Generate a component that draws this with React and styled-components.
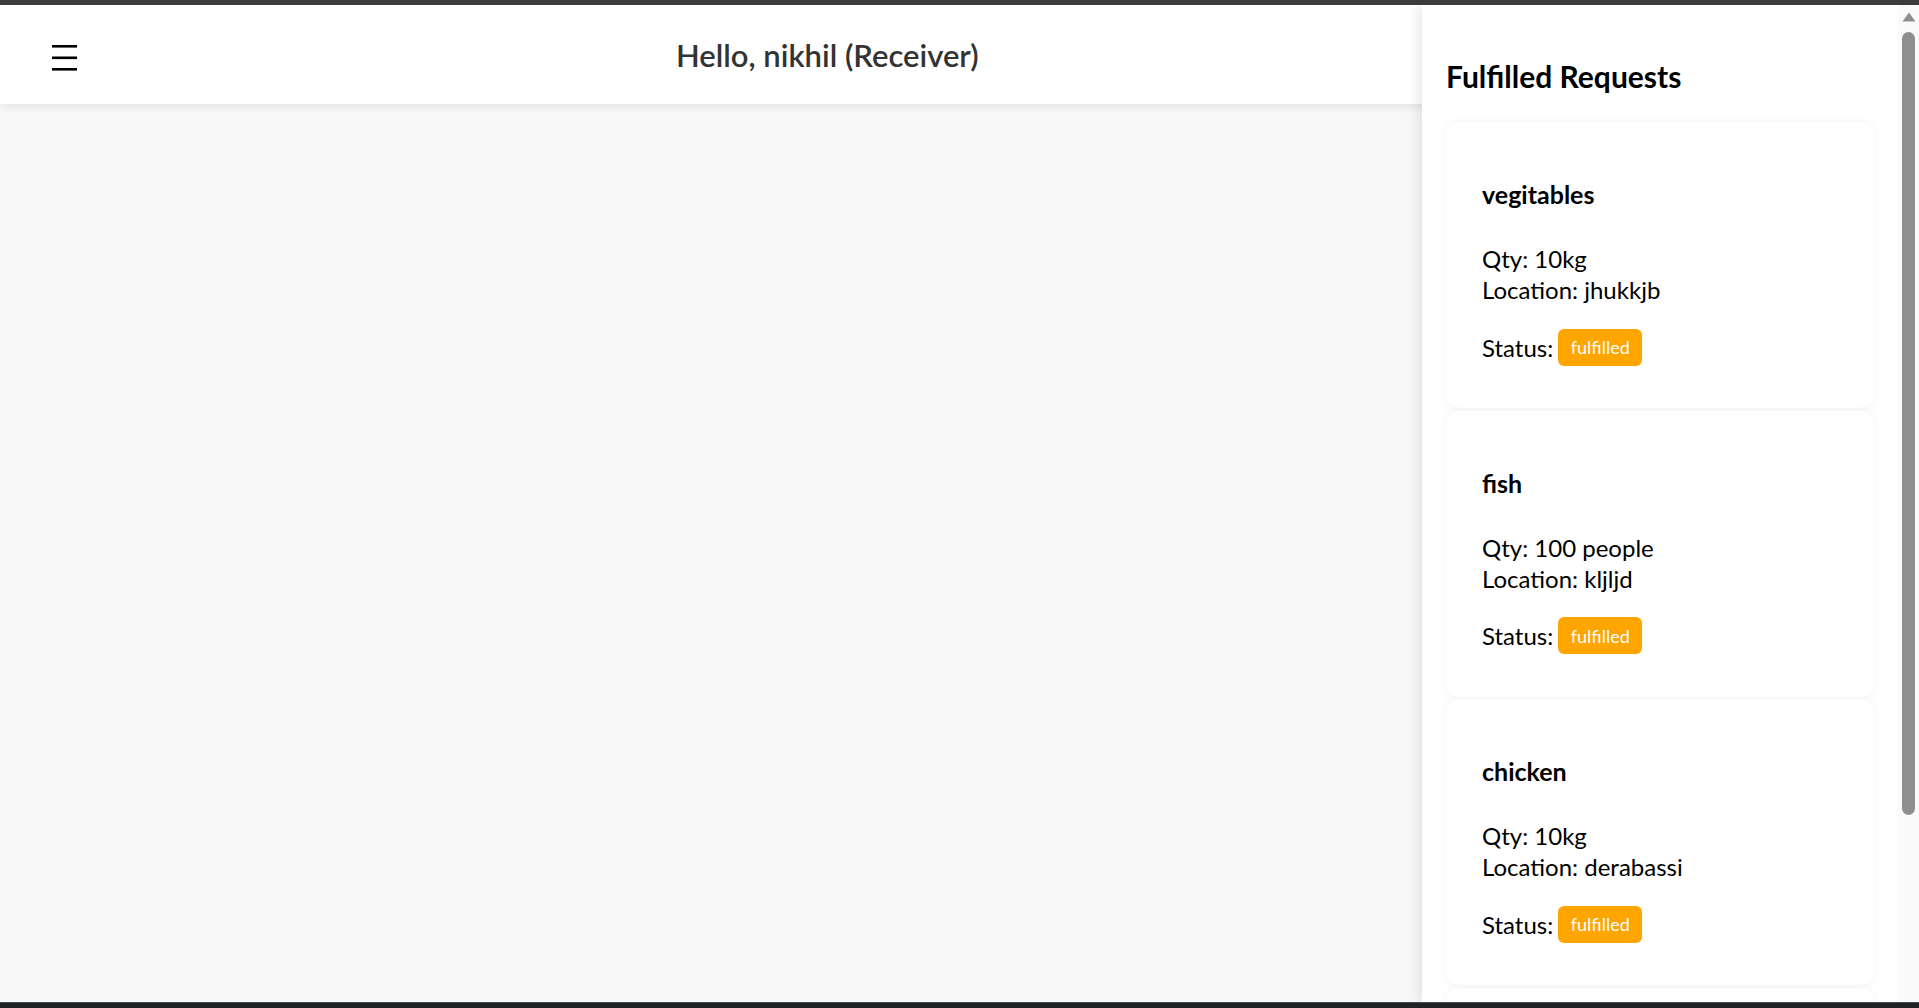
import React from "react";
import styled, { createGlobalStyle } from "styled-components";

const GlobalStyle = createGlobalStyle`
  html, body {
    margin: 0;
    padding: 0;
    height: 100%;
    overflow: hidden;
  }
  body {
    background: #f8f8f8;
    font-family: Lato, "Noto Sans", sans-serif;
    color: #000;
  }
  #root {
    height: 100%;
  }
`;

const requests = [
  { id: 1, name: "vegitables", qty: "10kg", location: "jhukkjb", status: "fulfilled" },
  { id: 2, name: "fish", qty: "100 people", location: "kljljd", status: "fulfilled" },
  { id: 3, name: "chicken", qty: "10kg", location: "derabassi", status: "fulfilled" },
];

function MenuIcon() {
  return (
    <svg width="25" height="30" viewBox="0 0 25 30">
      <rect x="0" y="2" width="25" height="2.6" fill="#000" />
      <rect x="0" y="13.5" width="25" height="2.6" fill="#000" />
      <rect x="0" y="25" width="25" height="2.6" fill="#000" />
    </svg>
  );
}

function ArrowUp() {
  return (
    <svg width="14" height="10" viewBox="0 0 14 10">
      <path d="M7 0.5 L13.5 9.5 H0.5 Z" fill="#8e8e8e" />
    </svg>
  );
}

export default function App() {
  return (
    <Frame>
      <GlobalStyle />
      <WindowEdge />
      <Viewport>
        <Header>
          <MenuButton aria-label="menu">
            <MenuIcon />
          </MenuButton>
          <Greeting>Hello, nikhil (Receiver)</Greeting>
        </Header>
        <Main />
        <Drawer>
          <DrawerBody>
            <DrawerTitle>Fulfilled Requests</DrawerTitle>
            {requests.map((r) => (
              <RequestCard key={r.id}>
                <CardTitle>{r.name}</CardTitle>
                <Details>
                  <Line>Qty: {r.qty}</Line>
                  <Line>Location: {r.location}</Line>
                </Details>
                <StatusRow>
                  <Line>Status:</Line>
                  <Badge>{r.status}</Badge>
                </StatusRow>
              </RequestCard>
            ))}
            <RequestCard />
          </DrawerBody>
          <ScrollRail>
            <ScrollArrow>
              <ArrowUp />
            </ScrollArrow>
            <ScrollThumb />
          </ScrollRail>
        </Drawer>
      </Viewport>
      <Taskbar />
    </Frame>
  );
}

const Frame = styled.div`
  height: 1008px;
  display: flex;
  flex-direction: column;
`;

const WindowEdge = styled.div`
  height: 5px;
  flex-shrink: 0;
  background: #3c3c3c;
`;

const Taskbar = styled.div`
  height: 6px;
  flex-shrink: 0;
  background: #202326;
  border-top: 1px solid #46494c;
  box-sizing: border-box;
`;

const Viewport = styled.div`
  position: relative;
  flex: 1;
  min-height: 0;
  display: flex;
  flex-direction: column;
  overflow: hidden;
  background: #f8f8f8;
`;

const Header = styled.header`
  height: 99px;
  flex-shrink: 0;
  display: flex;
  align-items: center;
  padding-left: 52px;
  background: #fff;
  box-shadow: 0 2px 10px rgba(0, 0, 0, 0.1);
  position: relative;
  z-index: 1;
`;

const MenuButton = styled.button`
  border: 0;
  padding: 0;
  background: none;
  display: flex;
  margin-top: 7px;
  cursor: pointer;
`;

const Greeting = styled.h1`
  margin: 3px 0 0 599px;
  font-size: 31px;
  font-weight: 600;
  line-height: 1.2;
  color: #333;
`;

const Main = styled.main`
  flex: 1;
`;

const Drawer = styled.aside`
  position: absolute;
  top: 0;
  right: 0;
  bottom: 0;
  width: 497px;
  display: flex;
  background: #fff;
  box-shadow: -3px 0 14px rgba(0, 0, 0, 0.1);
  z-index: 2;
`;

const DrawerBody = styled.div`
  flex: 1;
  min-width: 0;
  overflow: hidden;
  padding: 0 24px;
`;

const ScrollRail = styled.div`
  width: 21px;
  flex-shrink: 0;
  display: flex;
  flex-direction: column;
  align-items: center;
  background: #fafafa;
`;

const ScrollArrow = styled.div`
  height: 22px;
  display: flex;
  align-items: center;
  padding-top: 2px;
  box-sizing: border-box;
`;

const ScrollThumb = styled.div`
  width: 13px;
  height: 783px;
  margin-top: 5px;
  border-radius: 7px;
  background: #8e8e8e;
`;

const DrawerTitle = styled.h2`
  margin: 53px 0 28px;
  font-size: 30px;
  font-weight: 700;
  line-height: 1.2;
`;

const RequestCard = styled.div`
  box-sizing: border-box;
  height: 286px;
  margin-bottom: 2.5px;
  padding: 57px 36px 0;
  background: #fff;
  border-radius: 13px;
  box-shadow: 0 0 8px rgba(0, 0, 0, 0.05);
`;

const CardTitle = styled.h3`
  margin: 0;
  font-size: 25px;
  font-weight: 700;
  line-height: 1.2;
`;

const Details = styled.div`
  margin: 34px 0 23.5px;
`;

const Line = styled.div`
  font-size: 24px;
  line-height: 31px;
`;

const StatusRow = styled.div`
  display: flex;
  align-items: center;
  gap: 5px;
  height: 37px;
`;

const Badge = styled.span`
  display: inline-flex;
  align-items: center;
  height: 37px;
  padding: 0 12.5px;
  box-sizing: border-box;
  border-radius: 6px;
  background: #ffa500;
  color: #fff;
  font-size: 18px;
`;
